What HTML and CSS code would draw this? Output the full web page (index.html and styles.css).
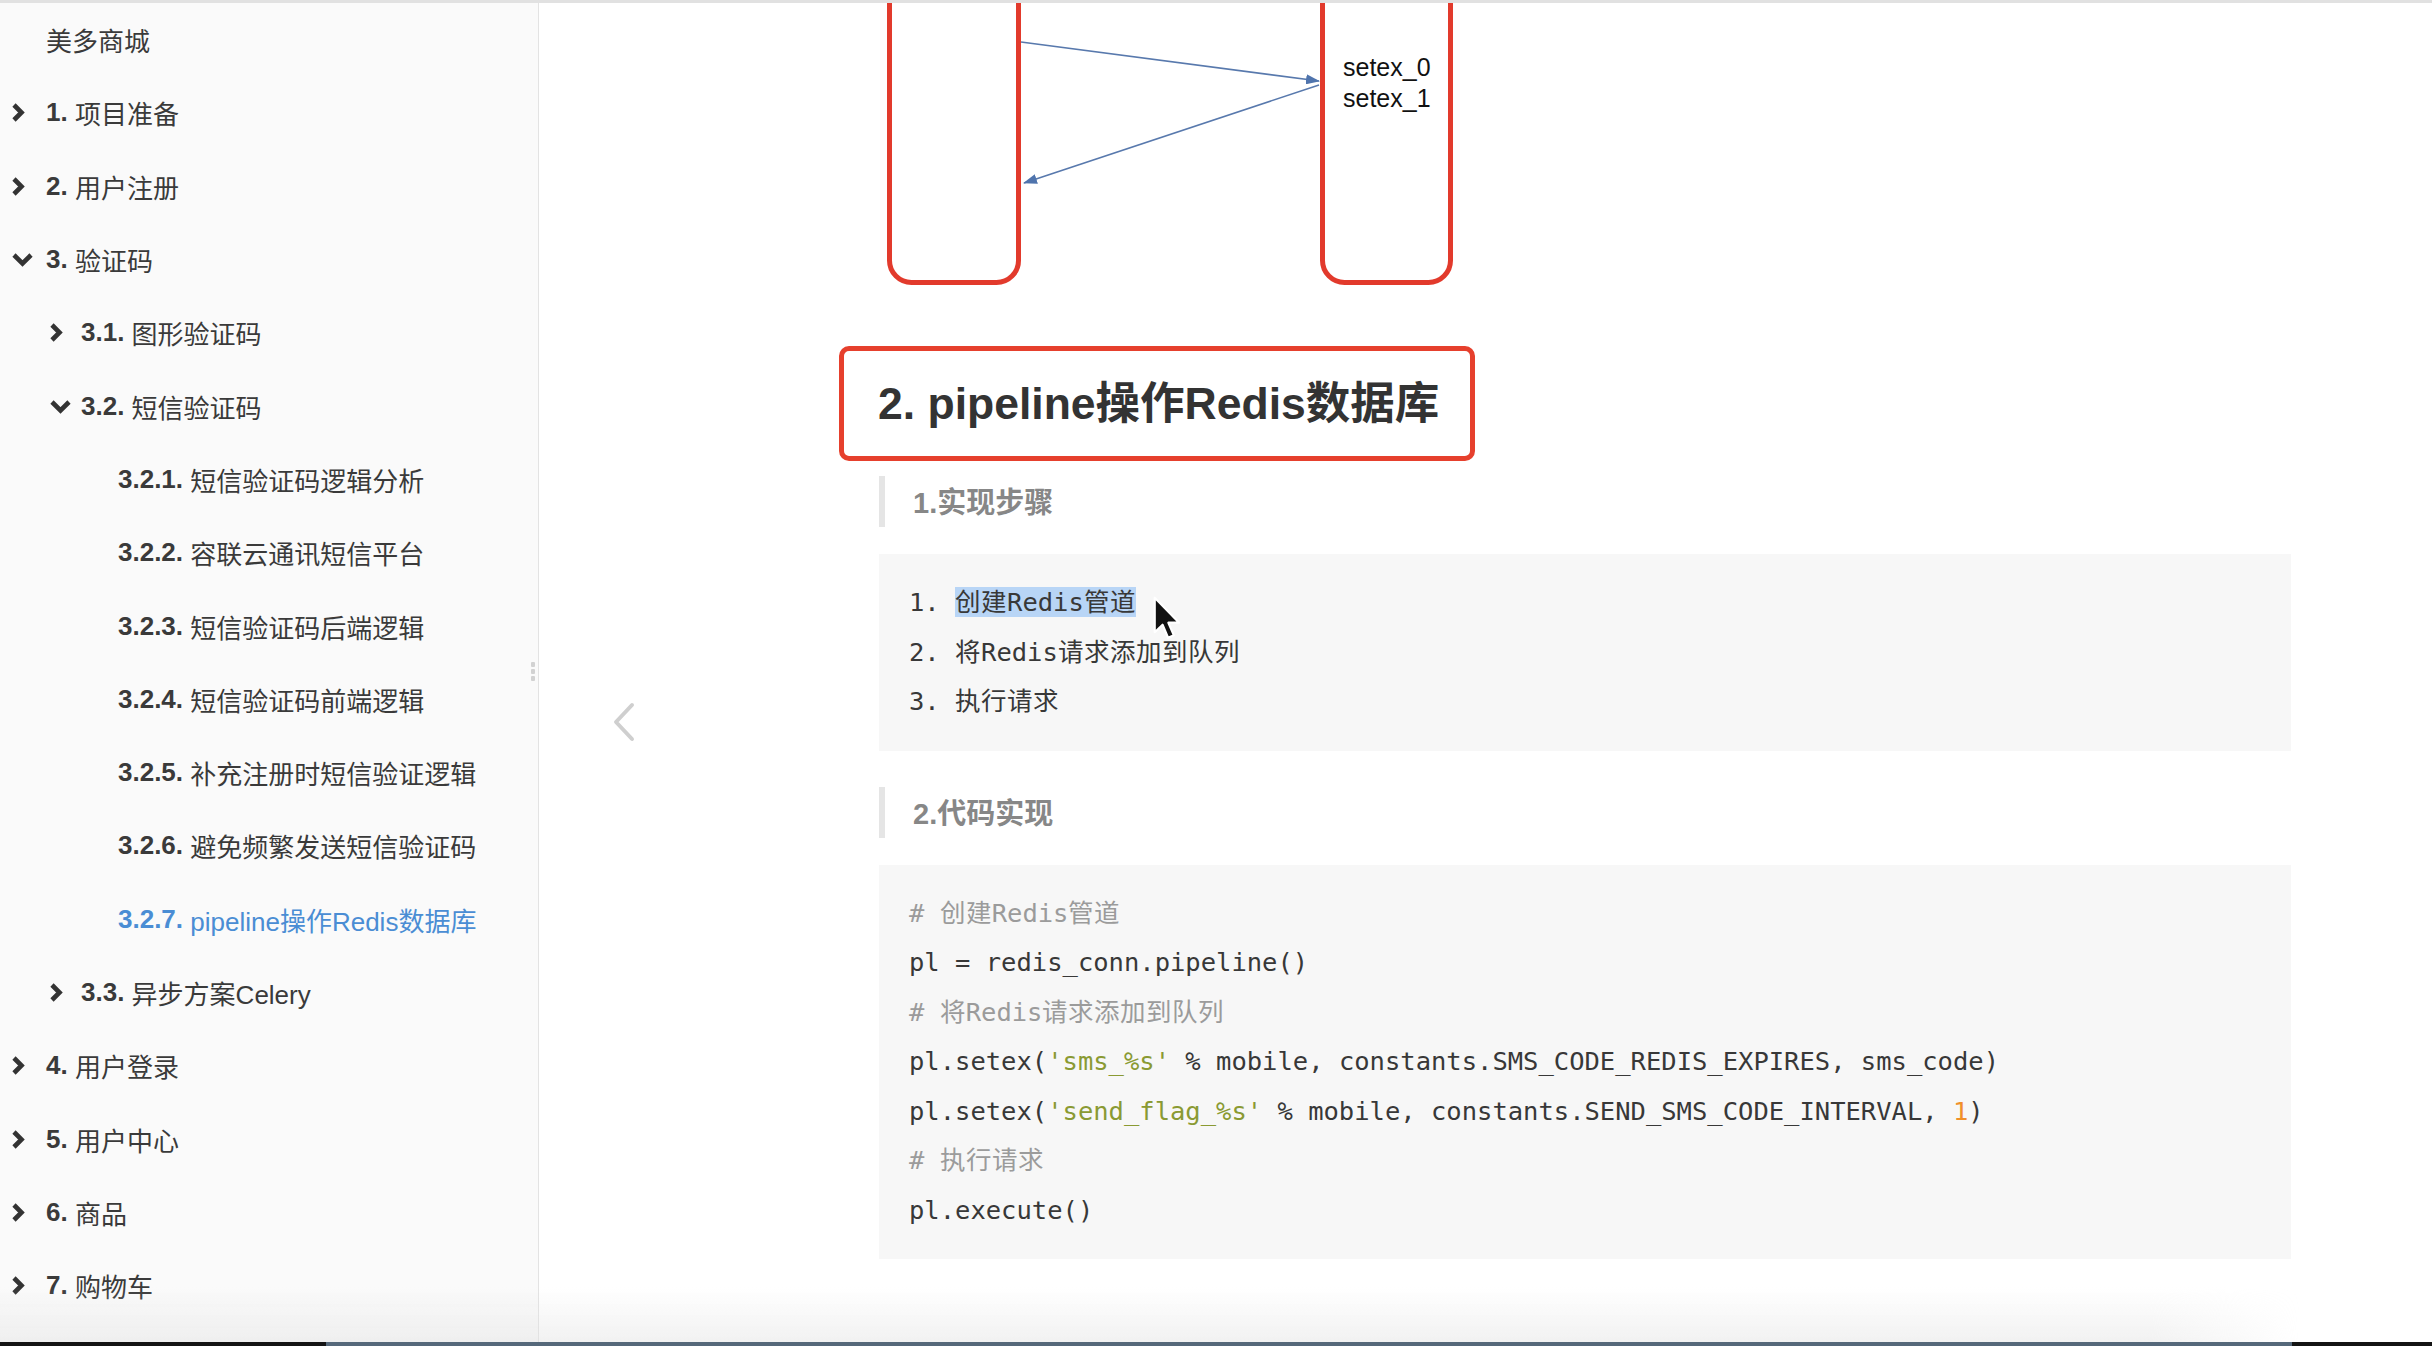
FILE: index.html
```html
<!DOCTYPE html>
<html lang="zh-CN">
<head>
<meta charset="utf-8">
<title>pipeline操作Redis数据库</title>
<link rel="stylesheet" href="styles.css">
</head>
<body>
<div class="topline"></div>
<div class="layout">
  <nav class="sidebar">
    <ul class="toc">
      <li class="item l0">美多商城</li>
      <li class="item l1"><span class="chev"><svg class="ico-r" viewBox="0 0 14 21"><path d="M3 3 L10.5 10.5 L3 18"/></svg></span><b>1.</b>&nbsp;项目准备</li>
      <li class="item l1"><span class="chev"><svg class="ico-r" viewBox="0 0 14 21"><path d="M3 3 L10.5 10.5 L3 18"/></svg></span><b>2.</b>&nbsp;用户注册</li>
      <li class="item l1"><span class="chev"><svg class="ico-d" viewBox="0 0 23 15"><path d="M3 3 L11.5 11.5 L20 3"/></svg></span><b>3.</b>&nbsp;验证码</li>
      <li class="item l2"><span class="chev"><svg class="ico-r" viewBox="0 0 14 21"><path d="M3 3 L10.5 10.5 L3 18"/></svg></span><b>3.1.</b>&nbsp;图形验证码</li>
      <li class="item l2"><span class="chev"><svg class="ico-d" viewBox="0 0 23 15"><path d="M3 3 L11.5 11.5 L20 3"/></svg></span><b>3.2.</b>&nbsp;短信验证码</li>
      <li class="item l3"><b>3.2.1.</b>&nbsp;短信验证码逻辑分析</li>
      <li class="item l3"><b>3.2.2.</b>&nbsp;容联云通讯短信平台</li>
      <li class="item l3"><b>3.2.3.</b>&nbsp;短信验证码后端逻辑</li>
      <li class="item l3"><b>3.2.4.</b>&nbsp;短信验证码前端逻辑</li>
      <li class="item l3"><b>3.2.5.</b>&nbsp;补充注册时短信验证逻辑</li>
      <li class="item l3"><b>3.2.6.</b>&nbsp;避免频繁发送短信验证码</li>
      <li class="item l3 active"><b>3.2.7.</b>&nbsp;pipeline操作Redis数据库</li>
      <li class="item l2"><span class="chev"><svg class="ico-r" viewBox="0 0 14 21"><path d="M3 3 L10.5 10.5 L3 18"/></svg></span><b>3.3.</b>&nbsp;异步方案Celery</li>
      <li class="item l1"><span class="chev"><svg class="ico-r" viewBox="0 0 14 21"><path d="M3 3 L10.5 10.5 L3 18"/></svg></span><b>4.</b>&nbsp;用户登录</li>
      <li class="item l1"><span class="chev"><svg class="ico-r" viewBox="0 0 14 21"><path d="M3 3 L10.5 10.5 L3 18"/></svg></span><b>5.</b>&nbsp;用户中心</li>
      <li class="item l1"><span class="chev"><svg class="ico-r" viewBox="0 0 14 21"><path d="M3 3 L10.5 10.5 L3 18"/></svg></span><b>6.</b>&nbsp;商品</li>
      <li class="item l1"><span class="chev"><svg class="ico-r" viewBox="0 0 14 21"><path d="M3 3 L10.5 10.5 L3 18"/></svg></span><b>7.</b>&nbsp;购物车</li>
    </ul>
    <div class="handle"><i></i><i></i><i></i></div>
  </nav>
  <main class="main">
    <div class="content">
      <svg class="diagram" width="600" height="290" viewBox="0 0 600 290">
        <defs>
          <marker id="ah" markerWidth="14" markerHeight="10" refX="13" refY="5" orient="auto" markerUnits="userSpaceOnUse">
            <path d="M0 0 L14 5 L0 10 Z" fill="#4f74ad"/>
          </marker>
        </defs>
        <rect x="10.5" y="-50" width="129" height="329.5" rx="22" fill="none" stroke="#e23a2c" stroke-width="5"/>
        <rect x="443.5" y="-50" width="128" height="329.5" rx="22" fill="none" stroke="#e23a2c" stroke-width="5"/>
        <line x1="142" y1="39" x2="440" y2="78" stroke="#5879ad" stroke-width="1.6" marker-end="url(#ah)"/>
        <line x1="440" y1="82" x2="145" y2="180" stroke="#5879ad" stroke-width="1.6" marker-end="url(#ah)"/>
        <text x="464" y="73" class="dtext">setex_0</text>
        <text x="464" y="104" class="dtext">setex_1</text>
      </svg>

      <h2 class="title">2. pipeline操作Redis数据库</h2>

      <blockquote class="note">1.实现步骤</blockquote>

      <pre class="block steps"><code>1. <span class="sel">创建Redis管道</span>
2. 将Redis请求添加到队列
3. 执行请求</code><svg class="cursor" viewBox="0 0 20 31"><path d="M1.2 1.2 L1.2 25 L6.6 19.8 L10.4 28.8 L14.4 27.1 L10.6 18.4 L18 18.4 Z" fill="#111" stroke="#fff" stroke-width="1.5" stroke-linejoin="round"/></svg></pre>

      <blockquote class="note">2.代码实现</blockquote>

      <pre class="block code"><code><span class="c"># 创建Redis管道</span>
pl = redis_conn.pipeline()
<span class="c"># 将Redis请求添加到队列</span>
pl.setex(<span class="s">'sms_%s'</span> % mobile, constants.SMS_CODE_REDIS_EXPIRES, sms_code)
pl.setex(<span class="s">'send_flag_%s'</span> % mobile, constants.SEND_SMS_CODE_INTERVAL, <span class="n">1</span>)
<span class="c"># 执行请求</span>
pl.execute()</code></pre>
    </div>
    <a class="nav-prev" aria-label="上一页"><svg viewBox="0 0 24 40" width="24" height="40"><path d="M20 3 L4 20 L20 37" fill="none" stroke="#cfcfcf" stroke-width="4" stroke-linecap="round" stroke-linejoin="round"/></svg></a>
  </main>
  <div class="shade"></div>
</div>
<div class="dock"></div>
</body>
</html>
```

FILE: styles.css
```css
html, body {
  margin: 0;
  padding: 0;
  height: 100%;
  overflow: hidden;
  background: #ffffff;
}

body {
  font-family: "Liberation Sans", "Noto Sans CJK SC", sans-serif;
  color: #333;
}

.topline {
  height: 3px;
  background: #e1e1e1;
}

.layout {
  display: flex;
  height: 1339px;
  position: relative;
}

.dock {
  height: 4px;
  background: linear-gradient(to right, #141414 0, #141414 326px, #55687a 326px, #55687a 2292px, #141414 2292px);
}

/* ---------- sidebar ---------- */
.sidebar {
  width: 538px;
  flex: none;
  background: #fafafa;
  border-right: 1px solid #e3e3e3;
  position: relative;
}

.toc {
  list-style: none;
  margin: 0;
  padding: 0;
}

.item {
  height: 73.3px;
  display: flex;
  align-items: center;
  font-size: 26px;
  color: #3a3a3a;
  white-space: nowrap;
}

.item b {
  font-weight: bold;
}

.l0 { padding-left: 46px; }
.l1 { padding-left: 11px; }
.l2 { padding-left: 49px; }
.l3 { padding-left: 118px; }

.chev {
  flex: none;
  width: 35px;
  display: flex;
  align-items: center;
}

.l2 .chev { width: 32px; }

.chev svg path {
  fill: none;
  stroke: #333;
  stroke-width: 4.6;
  stroke-linejoin: miter;
}

.ico-r { width: 14px; height: 21px; }
.ico-d { width: 23px; height: 15px; }

.active { color: #4a8dd4; }

.handle {
  position: absolute;
  right: 3px;
  top: 659px;
  display: flex;
  flex-direction: column;
  gap: 2px;
}

.handle i {
  display: block;
  width: 4px;
  height: 5px;
  border-radius: 1px;
  background: #d2d2d2;
}

/* ---------- main ---------- */
.main {
  flex: 1;
  position: relative;
  background: #ffffff;
}

.content {
  padding-left: 340px;
  width: 1412px;
}

.diagram {
  display: block;
}

.dtext {
  font-family: "Liberation Sans", sans-serif;
  font-size: 25px;
  fill: #111;
}

.title {
  margin: 53px 0 0 -40px;
  width: 636px;
  height: 115px;
  box-sizing: border-box;
  border: 5px solid #e6402d;
  border-radius: 10px;
  padding-left: 34px;
  line-height: 105px;
  font-size: 44.5px;
  font-weight: bold;
  color: #333;
  white-space: nowrap;
}

.note {
  margin: 15px 0 0;
  height: 51px;
  border-left: 6px solid #e5e5e5;
  padding-left: 28px;
  line-height: 54px;
  font-size: 29px;
  font-weight: bold;
  color: #878787;
}

.note + .block { margin-top: 27px; }
.block + .note { margin-top: 36px; }

.block {
  margin: 0;
  background: #f7f7f7;
  padding: 24px 30px 24.5px;
  font-family: "DejaVu Sans Mono", "Noto Sans CJK SC", monospace;
  font-size: 25.5px;
  line-height: 49.5px;
  color: #383838;
  white-space: pre;
}

.code {
  padding-top: 23.75px;
  padding-bottom: 23.75px;
}

.steps {
  position: relative;
}

.sel {
  background: #b8d5f6;
}

.cursor {
  position: absolute;
  left: 274px;
  top: 42px;
  width: 29px;
  height: 45px;
}

.c { color: #9b9b9b; }
.s { color: #8a9a33; }
.n { color: #f0902a; }

.nav-prev {
  position: absolute;
  left: 73px;
  top: 699px;
  display: block;
  width: 24px;
  height: 40px;
}

.shade {
  position: absolute;
  left: 0;
  right: 0;
  bottom: 0;
  height: 55px;
  pointer-events: none;
  background: linear-gradient(to bottom, rgba(225, 225, 225, 0), rgba(225, 225, 225, 0.45));
  -webkit-mask-image: linear-gradient(to right, #000 0, #000 2150px, transparent 2300px);
  mask-image: linear-gradient(to right, #000 0, #000 2150px, transparent 2300px);
}
```
